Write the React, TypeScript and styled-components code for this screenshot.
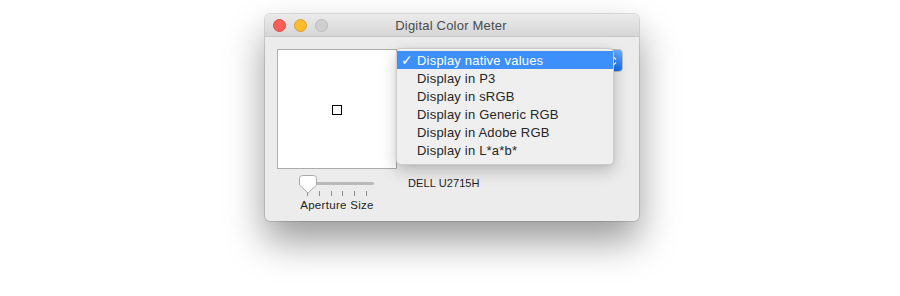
import React from 'react';
import styled, { createGlobalStyle } from 'styled-components';

const GlobalStyle = createGlobalStyle`
  html, body {
    margin: 0;
    padding: 0;
    background: #ffffff;
  }
  body {
    font-family: "Liberation Sans", Arial, sans-serif;
    -webkit-font-smoothing: antialiased;
  }
`;

const Page = styled.div`
  width: 900px;
  height: 296px;
  padding: 14px 0 0 265px;
  box-sizing: border-box;
`;

const Window = styled.div`
  width: 374px;
  height: 207px;
  background: #ececec;
  border-radius: 5px;
  box-shadow: 0 0 0 1px rgba(0, 0, 0, 0.12), 0 20px 38px rgba(0, 0, 0, 0.4);
  display: flex;
  flex-direction: column;
`;

const TitleBar = styled.div`
  height: 22px;
  border-bottom: 1px solid #c6c6c6;
  background: linear-gradient(#ebebeb, #d6d6d6);
  border-radius: 5px 5px 0 0;
  display: grid;
  grid-template-columns: 70px 1fr 70px;
  align-items: center;
`;

const Lights = styled.div`
  display: flex;
  gap: 8px;
  padding-left: 8px;
`;

const Light = styled.span<{ $fill: string; $edge: string }>`
  width: 11px;
  height: 11px;
  border-radius: 50%;
  background: ${(p) => p.$fill};
  border: 0.5px solid ${(p) => p.$edge};
`;

const Title = styled.div`
  text-align: center;
  font-size: 13px;
  letter-spacing: 0.2px;
  color: #4b4b4b;
  padding-right: 2px;
  padding-top: 1px;
`;

const Body = styled.div`
  display: grid;
  grid-template-columns: 120px 215px;
  grid-template-rows: 120px auto;
  column-gap: 11px;
  row-gap: 5px;
  padding: 12px 16px 0 12px;
`;

const Preview = styled.div`
  box-sizing: border-box;
  width: 120px;
  height: 120px;
  background: #ffffff;
  border: 1px solid #acacac;
  display: flex;
  align-items: center;
  justify-content: center;
`;

const Aperture = styled.div`
  width: 8px;
  height: 8px;
  border: 1px solid #000;
  margin-top: 1px;
`;

const PopupWrap = styled.div`
  position: relative;
  align-self: start;
`;

const PopupButton = styled.div`
  height: 23px;
  border-radius: 4px;
  background: #ffffff;
  border: 1px solid #bdbdbd;
  box-sizing: border-box;
  display: flex;
  justify-content: flex-end;
  overflow: hidden;
`;

const Stepper = styled.div`
  width: 17px;
  background: linear-gradient(#68acfb, #176ff0);
  display: flex;
  align-items: center;
  justify-content: center;
`;

const Menu = styled.div`
  position: absolute;
  left: -12px;
  top: -1px;
  width: 218px;
  box-sizing: border-box;
  padding: 2px 0 5px;
  background: #efefef;
  border: 1px solid rgba(0, 0, 0, 0.14);
  border-radius: 5px;
  box-shadow: 0 6px 16px rgba(0, 0, 0, 0.22), 0 0 3px rgba(0, 0, 0, 0.08);
`;

const MenuItem = styled.div<{ $active?: boolean }>`
  height: 18px;
  display: flex;
  align-items: center;
  font-size: 13px;
  letter-spacing: 0.2px;
  color: ${(p) => (p.$active ? '#ffffff' : '#262626')};
  background: ${(p) => (p.$active ? '#3d8ff9' : 'transparent')};
`;

const Check = styled.span`
  width: 20px;
  padding-left: 4px;
  box-sizing: border-box;
  font-family: "DejaVu Sans", sans-serif;
  font-size: 14px;
  font-weight: bold;
`;

const SliderColumn = styled.div`
  display: flex;
  flex-direction: column;
  align-items: center;
`;

const SliderTrackArea = styled.div`
  position: relative;
  width: 120px;
  height: 22px;
`;

const Track = styled.div`
  position: absolute;
  left: 30px;
  top: 8px;
  width: 67px;
  height: 3px;
  border-radius: 2px;
  background: #b9b9b9;
`;

const Ticks = styled.div`
  position: absolute;
  left: 30px;
  top: 17px;
  display: flex;
  gap: 10.8px;
`;

const Tick = styled.span`
  width: 1px;
  height: 5px;
  background: #8c8c8c;
`;

const Knob = styled.svg`
  position: absolute;
  left: 22px;
  top: 1px;
`;

const SliderLabel = styled.div`
  font-size: 11.5px;
  letter-spacing: 0.3px;
  line-height: 14px;
  margin-top: 2px;
  color: #1e1e1e;
`;

const DisplayName = styled.div`
  font-size: 11px;
  letter-spacing: 0.1px;
  line-height: 14px;
  margin-top: 2px;
  color: #1e1e1e;
`;

const options = [
  'Display native values',
  'Display in P3',
  'Display in sRGB',
  'Display in Generic RGB',
  'Display in Adobe RGB',
  'Display in L*a*b*',
];

const App: React.FC = () => {
  return (
    <Page>
      <GlobalStyle />
      <Window>
        <TitleBar>
          <Lights>
            <Light $fill="#fc5f57" $edge="#df4744" />
            <Light $fill="#fdbc2e" $edge="#de9f2a" />
            <Light $fill="#cfcfcf" $edge="#bababa" />
          </Lights>
          <Title>Digital Color Meter</Title>
          <div />
        </TitleBar>
        <Body>
          <Preview>
            <Aperture />
          </Preview>
          <PopupWrap>
            <PopupButton>
              <Stepper>
                <svg width="7" height="12" viewBox="0 0 7 12">
                  <path d="M1 4.5 L3.5 2 L6 4.5 M1 7.5 L3.5 10 L6 7.5" fill="none" stroke="#fff" strokeWidth="1.3" />
                </svg>
              </Stepper>
            </PopupButton>
            <Menu>
              {options.map((opt, i) => (
                <MenuItem key={opt} $active={i === 0}>
                  <Check>{i === 0 ? '✓' : ''}</Check>
                  {opt}
                </MenuItem>
              ))}
            </Menu>
          </PopupWrap>
          <SliderColumn>
            <SliderTrackArea>
              <Track />
              <Ticks>
                {[0, 1, 2, 3, 4, 5].map((t) => (
                  <Tick key={t} />
                ))}
              </Ticks>
              <Knob width="18" height="19" viewBox="0 0 18 19">
                <path
                  d="M3.5 0.5 H14.5 A3 3 0 0 1 17.5 3.5 V10 L9 18 L0.5 10 V3.5 A3 3 0 0 1 3.5 0.5 Z"
                  fill="#ffffff"
                  stroke="#a9a9a9"
                  strokeWidth="1"
                />
              </Knob>
            </SliderTrackArea>
            <SliderLabel>Aperture Size</SliderLabel>
          </SliderColumn>
          <DisplayName>DELL U2715H</DisplayName>
        </Body>
      </Window>
    </Page>
  );
};

export default App;
